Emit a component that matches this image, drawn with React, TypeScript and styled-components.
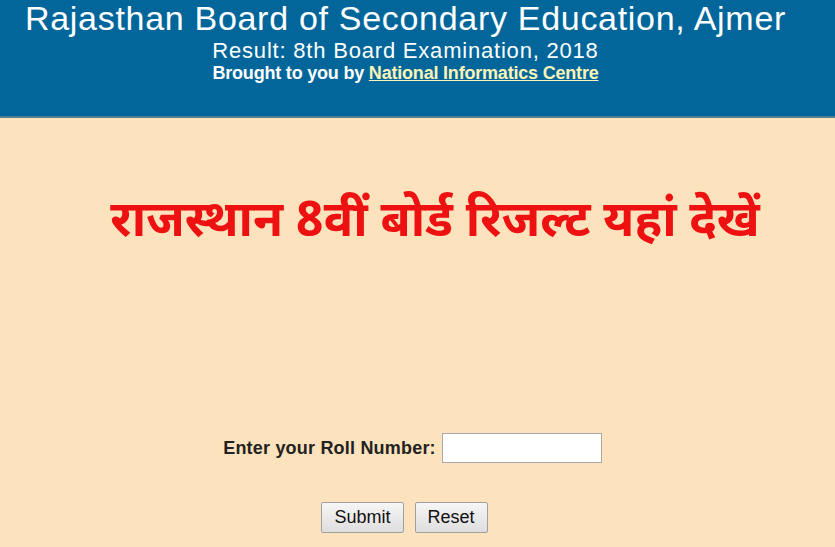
import React, { useState } from 'react';
import styled, { createGlobalStyle } from 'styled-components';

const GlobalStyle = createGlobalStyle`
  html, body {
    margin: 0;
    padding: 0;
    background: #fde3bd;
  }
  body {
    font-family: 'Liberation Sans', Arial, sans-serif;
  }
`;

const Page = styled.div`
  width: 835px;
  height: 547px;
  overflow: hidden;
  background: #fde3bd;
`;

const Header = styled.div`
  background: #02669a;
  height: 118px;
  border-bottom: 2px solid #4f7f93;
  color: #ffffff;
  text-align: center;
  box-sizing: border-box;
  padding-right: 24px;
`;

const Title = styled.div`
  font-size: 34px;
  line-height: 37px;
  letter-spacing: 0.7px;
`;

const SubTitle = styled.div`
  margin-top: 2px;
  font-size: 22px;
  line-height: 24px;
  letter-spacing: 0.8px;
`;

const Credit = styled.div`
  font-size: 18px;
  font-weight: bold;
  line-height: 20px;
  letter-spacing: -0.2px;
`;

const CreditLink = styled.a`
  color: #fdf4b8;
  text-decoration: underline;
`;

const Banner = styled.h1`
  margin: 78px 0 0;
  padding-left: 35px;
  text-align: center;
  color: #ee1111;
  font-family: 'Noto Sans Devanagari', 'Lohit Devanagari', 'Noto Sans', sans-serif;
  font-size: 49px;
  font-weight: bold;
  line-height: 56px;
`;

const Form = styled.form`
  margin-top: 181px;
  display: flex;
  flex-direction: column;
  align-items: center;
  padding-right: 10px;
`;

const Row = styled.div`
  display: flex;
  align-items: center;
  gap: 6px;
`;

const Label = styled.label`
  font-size: 18px;
  font-weight: bold;
  letter-spacing: 0.2px;
  color: #222;
`;

const Input = styled.input`
  width: 160px;
  height: 30px;
  box-sizing: border-box;
  border: 1px solid #a9a9a9;
  background: #fff;
  font-size: 16px;
  padding: 2px 4px;
`;

const Buttons = styled.div`
  margin-top: 39px;
  margin-right: 16px;
  display: flex;
  gap: 11px;
`;

const Button = styled.button`
  height: 31px;
  padding: 0 12px;
  font-family: 'Liberation Sans', Arial, sans-serif;
  font-size: 18px;
  color: #111;
  border: 1px solid #a0a0a0;
  border-radius: 2px;
  background: linear-gradient(#f6f6f6, #dedede);
`;

export default function App() {
  const [roll, setRoll] = useState('');
  return (
    <Page>
      <GlobalStyle />
      <Header>
        <Title>Rajasthan Board of Secondary Education, Ajmer</Title>
        <SubTitle>Result: 8th Board Examination, 2018</SubTitle>
        <Credit>
          Brought to you by <CreditLink href="#">National Informatics Centre</CreditLink>
        </Credit>
      </Header>
      <Banner>राजस्थान 8वीं बोर्ड रिजल्ट यहां देखें</Banner>
      <Form onSubmit={e => e.preventDefault()}>
        <Row>
          <Label htmlFor="roll">Enter your Roll Number:</Label>
          <Input id="roll" value={roll} onChange={e => setRoll(e.target.value)} />
        </Row>
        <Buttons>
          <Button type="submit">Submit</Button>
          <Button type="reset" onClick={() => setRoll('')}>Reset</Button>
        </Buttons>
      </Form>
    </Page>
  );
}
